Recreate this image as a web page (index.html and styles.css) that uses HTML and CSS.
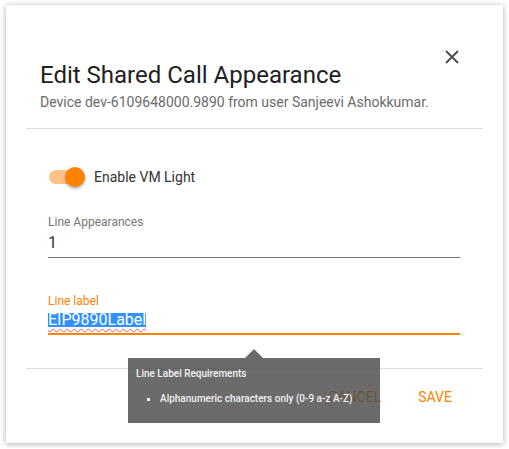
FILE: index.html
```html
<!DOCTYPE html>
<html>
<head>
<meta charset="utf-8">
<link rel="stylesheet" href="styles.css">
</head>
<body>
<div class="dialog">
  <div class="header">
    <div class="titles">
      <h1 class="title">Edit Shared Call Appearance</h1>
      <p class="subtitle">Device dev-6109648000.9890 from user Sanjeevi Ashokkumar.</p>
    </div>
    <button class="close" aria-label="Close">
      <svg width="14" height="14" viewBox="0 0 14 14"><path d="M1 1 L13 13 M13 1 L1 13" stroke="#4a4a4a" stroke-width="1.8" fill="none"/></svg>
    </button>
  </div>
  <div class="divider"></div>
  <div class="content">
    <div class="toggle-row">
      <span class="toggle"><span class="track"></span><span class="thumb"></span></span>
      <span class="toggle-label">Enable VM Light</span>
    </div>
    <div class="field">
      <div class="field-label">Line Appearances</div>
      <div class="field-value">1</div>
    </div>
    <div class="field field-focused">
      <div class="field-label">Line label</div>
      <div class="field-value"><span class="selected">EIP9890Label</span></div>
    </div>
  </div>
  <div class="divider divider-bottom"></div>
  <div class="actions">
    <button class="btn">CANCEL</button>
    <button class="btn">SAVE</button>
  </div>
  <div class="tooltip">
    <div class="tooltip-title">Line Label Requirements</div>
    <ul class="tooltip-list">
      <li><span class="dot"></span>Alphanumeric characters only (0-9 a-z A-Z)</li>
    </ul>
  </div>
</div>
</body>
</html>
```
FILE: styles.css
```css
html, body {
  margin: 0;
  padding: 0;
  background: #ffffff;
}
body {
  font-family: Roboto, "Liberation Sans", Arial, sans-serif;
  color: #212121;
}
.dialog {
  position: relative;
  margin: 5px 6px;
  width: 497px;
  height: 438px;
  background: #ffffff;
  box-shadow: 0 1px 6px rgba(0, 0, 0, 0.32);
}
.header {
  display: flex;
  justify-content: space-between;
  align-items: flex-start;
  padding: 40px 39px 0 34px;
}
.titles {
  margin-top: 16px;
}
.title {
  margin: 0;
  font-size: 24px;
  line-height: 28px;
  font-weight: 400;
  color: #212121;
}
.subtitle {
  margin: 3px 0 0;
  font-size: 14px;
  line-height: 20px;
  color: #6b6b6b;
}
.close {
  width: 24px;
  height: 24px;
  padding: 0;
  border: 0;
  background: none;
  display: flex;
  align-items: center;
  justify-content: center;
}
.divider {
  height: 1px;
  background: #dcdcdc;
  margin: 16px 20px 0;
}
.content {
  padding: 0 43px 0 42px;
}
.toggle-row {
  display: flex;
  align-items: center;
  height: 24px;
  margin-top: 36px;
}
.toggle {
  position: relative;
  width: 36px;
  height: 24px;
  margin-left: 1px;
  margin-right: 9px;
  display: flex;
  align-items: center;
}
.track {
  width: 36px;
  height: 14px;
  border-radius: 7px;
  background: #ffc286;
}
.thumb {
  position: absolute;
  right: 0;
  top: 2px;
  width: 20px;
  height: 20px;
  border-radius: 50%;
  background: #ff8200;
  box-shadow: 0 2px 3px rgba(0, 0, 0, 0.28);
}
.toggle-label {
  font-size: 14px;
  line-height: 20px;
  color: #333333;
}
.field {
  margin-top: 25px;
}
.field-label {
  font-size: 12px;
  line-height: 16px;
  color: #777777;
}
.field-value {
  margin-top: 3px;
  font-size: 16px;
  line-height: 20px;
  padding-bottom: 4px;
  border-bottom: 1px solid #757575;
  color: #333333;
}
.field-focused {
  margin-top: 35px;
}
.field-focused .field-label {
  color: #ff8200;
}
.field-focused .field-value {
  margin-top: 0;
  padding-top: 4px;
  height: 20px;
  padding-bottom: 0;
  line-height: 14px;
  border-bottom: 2px solid #ff8200;
}
.selected {
  display: inline-block;
  height: 14px;
  line-height: 14px;
  background: #3390ff;
  color: #ffffff;
  text-decoration: underline wavy rgba(224, 32, 32, 0.7);
  text-decoration-thickness: 1px;
  text-underline-offset: 3px;
}
.divider-bottom {
  margin-top: 33px;
}
.actions {
  display: flex;
  justify-content: flex-end;
  gap: 5px;
  padding: 10px 35px 0 0;
}
.btn {
  min-width: 64px;
  height: 36px;
  padding: 0 16px;
  border: 0;
  background: none;
  font-family: Roboto, "Liberation Sans", Arial, sans-serif;
  font-size: 14px;
  line-height: 36px;
  color: #ff8200;
}
.tooltip {
  position: absolute;
  left: 122px;
  top: 353px;
  width: 252px;
  height: 65px;
  box-sizing: border-box;
  padding: 9px 8px 0;
  background: rgba(75, 75, 75, 0.82);
  color: #f2f2f2;
}
.tooltip::before {
  content: "";
  position: absolute;
  left: 117px;
  top: -9px;
  border-left: 9px solid transparent;
  border-right: 9px solid transparent;
  border-bottom: 9px solid rgba(75, 75, 75, 0.82);
}
.tooltip-title {
  font-size: 10px;
  line-height: 14px;
  font-weight: 500;
}
.tooltip-list {
  list-style: none;
  margin: 11px 0 0;
  padding: 0;
}
.tooltip-list li {
  display: flex;
  align-items: center;
  font-size: 10px;
  line-height: 14px;
  font-weight: 500;
}
.dot {
  width: 3px;
  height: 3px;
  background: #f2f2f2;
  margin: 0 10px 0 11px;
}
```
